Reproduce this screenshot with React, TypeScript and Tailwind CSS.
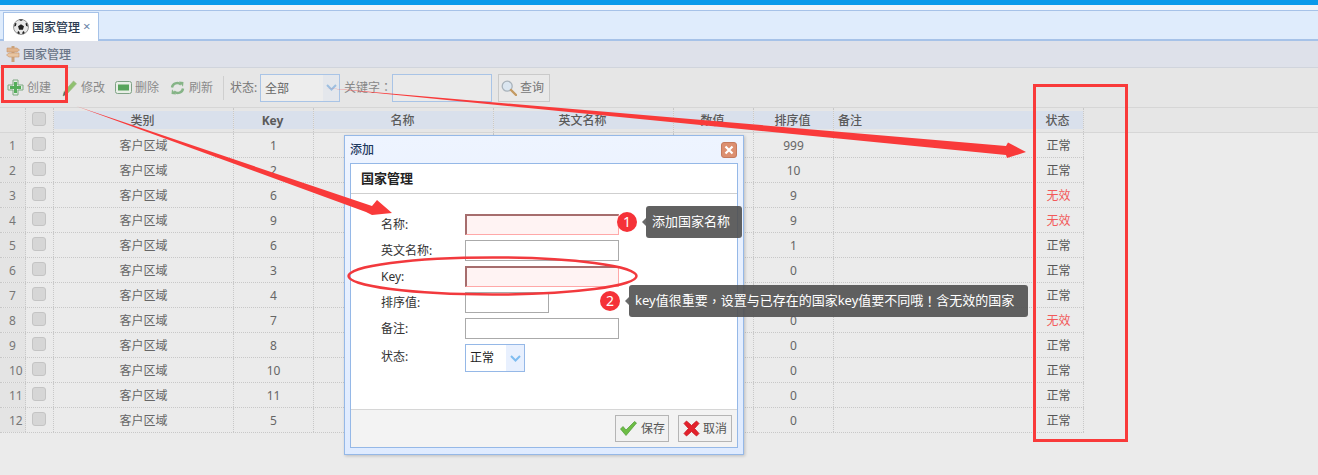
import React from "react";

const font = { fontFamily: '"Noto Sans","Noto Sans CJK SC",sans-serif' };
const tcFont = { fontFamily: '"Noto Sans CJK TC",sans-serif' };

const cols = [
  { t: "类别", w: "w-[180px]" },
  { t: "Key", w: "w-[80px]", bold: true },
  { t: "名称", w: "w-[180px]" },
  { t: "英文名称", w: "w-[180px]" },
  { t: "数值", w: "w-[80px]" },
  { t: "排序值", w: "w-[80px]" },
  { t: "备注", w: "w-[200px]", left: true },
  { t: "状态", w: "w-[50px]" },
];

const rows: [string, string, boolean][] = [
  ["1", "999", true],
  ["2", "10", true],
  ["6", "9", false],
  ["9", "9", false],
  ["6", "1", true],
  ["3", "0", true],
  ["4", "0", true],
  ["7", "0", false],
  ["8", "0", true],
  ["10", "0", true],
  ["11", "0", true],
  ["5", "0", true],
];

function Ball() {
  return (
    <svg width="16" height="16" viewBox="0 0 16 16">
      <circle cx="8" cy="8" r="7.5" fill="#e8e8e8" stroke="#555" strokeWidth="0.6" />
      <path d="M8 5.2 11 7.3 9.9 10.7H6.1L5 7.3Z" fill="#222" />
      <path d="M6 .8 8 2l2-1.2-.4-.3H6.4ZM14 4l.9 3.4-1.7-.5-.8-2.3ZM2 4l1.600.6-.8 2.300-1.700.5ZM4.200 13.200 5.800 12 7 14.500 5.500 15ZM11.800 13.200 10.200 12 9 14.500 10.500 15Z" fill="#222" />
    </svg>
  );
}

function Sign() {
  return (
    <svg width="16" height="18" viewBox="0 0 16 18">
      <rect x="6.500" y="1" width="3" height="16" fill="#c9a37b" />
      <path d="M2 3h10l2.500 2-2.500 2H2Z" fill="#e0b48c" stroke="#c8966b" strokeWidth=".6" />
      <path d="M14 8H4L1.500 10 4 12h10Z" fill="#e8c5a1" stroke="#c8966b" strokeWidth=".6" />
    </svg>
  );
}

function Plus() {
  return (
    <svg width="17" height="17" viewBox="0 0 17 17">
      <path d="M6 1h5v5h5v5h-5v5H6v-5H1V6h5Z" fill="#e4eee4" stroke="#7fa982" strokeWidth="1" strokeLinejoin="round" />
      <path d="M7 3h3v4h4v3h-4v4H7v-4H3V7h4Z" fill="#55ad5a" />
    </svg>
  );
}

function Pencil() {
  return (
    <svg width="15" height="18" viewBox="0 0 15 18">
      <path d="M1 17l1.200-4.500L11.500 2l3 2.700L5 15Z" fill="#8fc16f" stroke="#9cb78a" strokeWidth=".7" />
      <path d="M1 17l1.200-4.500L5 15Z" fill="#666" />
    </svg>
  );
}

function Minus() {
  return (
    <svg width="17" height="13" viewBox="0 0 17 13">
      <rect x=".5" y=".5" width="16" height="12" rx="2" fill="#e8eee6" stroke="#7fa285" />
      <rect x="3" y="3.500" width="11" height="6" fill="#58a45c" />
    </svg>
  );
}

function Refresh() {
  return (
    <svg width="15" height="16" viewBox="0 0 15 16" fill="none">
      <path d="M2 7.500C2.500 3.500 7.500 1.500 11 4.500" stroke="#86b487" strokeWidth="2.400" />
      <path d="M9 1.500l4.500.5-.5 4.800Z" fill="#86b487" />
      <path d="M13 8.500C12.500 12.500 7.500 14.500 4 11.500" stroke="#86b487" strokeWidth="2.400" />
      <path d="M6 14.500l-4.500-.5.500-4.800Z" fill="#86b487" />
    </svg>
  );
}

function Search() {
  return (
    <svg width="16" height="16" viewBox="0 0 16 16" fill="none">
      <circle cx="6.200" cy="6.200" r="5" fill="#dbe6f0" stroke="#a9b3bb" strokeWidth="1.300" />
      <path d="M10 10l5 5" stroke="#c49a62" strokeWidth="2.400" strokeLinecap="round" />
    </svg>
  );
}

function Chevron({ color }: { color: string }) {
  return (
    <svg width="11" height="7" viewBox="0 0 11 7" fill="none">
      <path d="M1 1l4.500 4.500L10 1" stroke={color} strokeWidth="2" />
    </svg>
  );
}

function Check() {
  return (
    <svg width="17" height="15" viewBox="0 0 17 15">
      <path d="M.5 8 3 5.500 6 9 14.500.5 16.500 2 6 14.500Z" fill="#6dbd45" stroke="#4e9a35" strokeWidth=".7" />
    </svg>
  );
}

function Cross({ size = 17 }: { size?: number }) {
  return (
    <svg width={size} height={size} viewBox="0 0 17 17">
      <path d="M3.500 1 8.500 5.500 13.500 1 16 3.500 11.500 8.500 16 13.500 13.500 16 8.500 11.500 3.500 16 1 13.500 5.500 8.500 1 3.500Z" fill="#e3222c" stroke="#c8141d" strokeWidth=".8" strokeLinejoin="round" />
    </svg>
  );
}

function ToolItem({ icon, label, cls }: { icon: React.ReactNode; label: string; cls: string }) {
  return (
    <div className={`flex items-center ${cls}`}>
      {icon}
      <span className="text-[12px] text-[#8a8a8a] leading-none">{label}</span>
    </div>
  );
}

function Field({ label, wide = true, invalid = false }: { label: string; wide?: boolean; invalid?: boolean }) {
  return (
    <div className="flex items-center h-[21px] mb-[5px]">
      <span className="w-[84px] text-[12px] text-[#333] pt-[1px]">{label}</span>
      <div
        className={`h-[21px] border ${wide ? "w-[154px]" : "w-[84px]"} ${
          invalid ? "bg-[#fff3f3] border-[#ffa8a8] border-l-[#a66d6d] border-t-[#a66d6d] border-t-2 border-l-2" : "bg-white border-[#aaaaaa]"
        }`}
      />
    </div>
  );
}

function Tip({ n, text, cls, w }: { n: string; text: React.ReactNode; cls: string; w: string }) {
  return (
    <div className={`absolute flex items-center ${cls}`}>
      <div className="w-[20px] h-[20px] rounded-full bg-[#f53238] text-white text-[14px] flex items-center justify-center leading-none">{n}</div>
      <div className="w-0 h-0 ml-[5px] border-y-[4px] border-y-transparent border-r-[4px] border-r-[#5a5a5a]/90" />
      <div className={`h-[32px] rounded-[3px] bg-[#505050]/90 text-white text-[13px] flex items-center pl-[6px] whitespace-nowrap ${w}`}>{text}</div>
    </div>
  );
}

export default function App() {
  return (
    <div className="relative w-[1318px] h-[475px] overflow-hidden bg-[#ebebeb]" style={font}>
      <div className="h-[5px] bg-[#0a9aea]" />
      <div className="h-[5px] bg-[#f0f4f9]" />
      <div className="h-[31px] bg-[#dfecfc] border-t border-b-2 border-[#a6c2e8] pl-[3px] flex items-end">
        <div className="w-[96px] h-[29px] -mb-[2px] bg-white border border-b-0 border-[#a6c2e8] flex items-center pl-[9px]">
          <Ball />
          <span className="ml-[3px] pt-[1px] text-[12px] font-medium text-[#2c3b50]">国家管理</span>
          <span className="ml-[3px] text-[13px] text-[#6a83a6]">×</span>
        </div>
      </div>
      <div className="h-[27px] bg-[#dee1ea] border-b border-[#d0d4dc] flex items-center pl-[5px] gap-[2px]">
        <Sign />
        <span className="pt-[1px] text-[12px] text-[#6b7687] font-medium">国家管理</span>
      </div>
      <div className="h-[39px] bg-[#e6e6e6] flex items-center">
        <ToolItem icon={<Plus />} label="创建" cls="ml-[7px] w-[55px] gap-[3px]" />
        <ToolItem icon={<Pencil />} label="修改" cls="w-[53px] gap-[4px]" />
        <ToolItem icon={<Minus />} label="删除" cls="w-[55px] gap-[3px]" />
        <ToolItem icon={<Refresh />} label="刷新" cls="w-[53px] gap-[4px]" />
        <div className="w-px h-[24px] bg-[#cfcfcf]" />
        <span className="ml-[6px] w-[30px] text-[12px] text-[#777]">状态:</span>
        <div className="w-[80px] h-[28px] border border-[#a9c4e6] flex bg-[#ededed]">
          <span className="w-[62px] pl-[4px] pt-[1px] text-[12px] text-[#666] leading-[26px]">全部</span>
          <div className="flex-1 bg-[#e4e7ec] flex items-center justify-center"><Chevron color="#9dbfe0" /></div>
        </div>
        <span className="ml-[4px] w-[48px] text-[12px] text-[#888] whitespace-nowrap">关键字<span style={tcFont}>：</span></span>
        <div className="w-[100px] h-[28px] border border-[#a9c4e6] bg-[#eaeaea]" />
        <div className="ml-[6px] w-[52px] h-[28px] border border-[#cacaca] bg-[#e9e9e9] flex items-center pl-[2px] gap-[3px]">
          <Search />
          <span className="text-[12px] text-[#777]">查询</span>
        </div>
      </div>
      <div className="h-[26px] bg-[#e6e6e6] border-y border-[#d6d6d6] flex w-full">
        <div className="w-[26px] border-r border-dotted border-[#c8c8c8]" />
        <div className="w-[28px] pr-[1px] pb-[2px] border-r border-dotted border-[#c8c8c8] flex items-center justify-center">
          <div className="w-[14px] h-[14px] rounded-[3px] bg-[#d6d6d6] border border-[#c4c4c4]" />
        </div>
        {cols.map((c) => (
          <div key={c.t} className={`${c.w} h-full border-r border-dotted border-[#c8c8c8] flex items-center`}>
            <div className={`w-full h-[18px] bg-[#d9e0ec] flex items-center pt-[1px] text-[12px] text-[#5a5a5a] ${c.bold ? "font-bold" : "font-medium"} ${c.left ? "justify-start pl-[4px]" : "justify-center pr-[2px]"}`}>
              {c.t}
            </div>
          </div>
        ))}
      </div>
      {rows.map((r, i) => (
        <div key={i} className="h-[25px] w-[1084px] flex border-b border-dotted border-[#c8c8c8] text-[12px] text-[#666]">
          <div className="w-[26px] pl-[9px] pt-[1px] bg-[#e4e4e4] border-r border-dotted border-[#c8c8c8] flex items-center text-[#777]">{i + 1}</div>
          <div className="w-[28px] pr-[1px] pb-[2px] border-r border-dotted border-[#c8c8c8] flex items-center justify-center">
            <div className="w-[14px] h-[14px] rounded-[3px] bg-[#d6d6d6] border border-[#c4c4c4]" />
          </div>
          <div className="w-[180px] pt-[1px] border-r border-dotted border-[#c8c8c8] flex items-center justify-center">客户区域</div>
          <div className="w-[80px] pt-[1px] border-r border-dotted border-[#c8c8c8] flex items-center justify-center">{r[0]}</div>
          <div className="w-[180px] border-r border-dotted border-[#c8c8c8]" />
          <div className="w-[180px] border-r border-dotted border-[#c8c8c8]" />
          <div className="w-[80px] border-r border-dotted border-[#c8c8c8]" />
          <div className="w-[80px] pt-[1px] border-r border-dotted border-[#c8c8c8] flex items-center justify-center">{r[1]}</div>
          <div className="w-[200px] border-r border-dotted border-[#c8c8c8]" />
          <div className={`w-[50px] pt-[1px] border-r border-dotted border-[#c8c8c8] flex items-center justify-center ${r[2] ? "text-[#555]" : "text-[#f25a5a]"}`}>
            {r[2] ? "正常" : "无效"}
          </div>
        </div>
      ))}

      {/* dialog */}
      <div className="absolute left-[344px] top-[135px] w-[400px] h-[320px] border border-[#95b8e7] bg-gradient-to-b from-[#eef4ff] to-[#dfebff] shadow-[1px_1px_3px_rgba(0,0,0,0.2)] flex flex-col">
        <div className="h-[27px] flex items-center justify-between pl-[5px] pr-[6px]">
          <span className="text-[12px] font-medium text-[#1f3a5f]">添加</span>
          <div className="w-[16px] h-[16px] rounded-[3px] bg-[#dc8f70] border border-[#c47a5e] flex items-center justify-center">
            <svg width="10" height="10" viewBox="0 0 10 10"><path d="M1.500 1.500l7 7M8.500 1.500l-7 7" stroke="#fff" strokeWidth="2.200" /></svg>
          </div>
        </div>
        <div className="mx-[5px] w-[388px] h-[285px] bg-white border border-[#95b8e7] flex flex-col">
          <div className="h-[30px] border-b border-[#cfcfcf] pl-[10px] flex items-center text-[13px] font-bold text-[#222]">国家管理</div>
          <div className="flex-1 pl-[30px] pt-[20px]">
            <Field label="名称:" invalid />
            <Field label="英文名称:" />
            <Field label="Key:" invalid />
            <Field label="排序值:" wide={false} />
            <Field label="备注:" />
            <div className="flex items-center">
              <span className="w-[84px] text-[12px] text-[#333] -mt-[2px]">状态:</span>
              <div className="w-[60px] h-[28px] border border-[#95b8e7] flex">
                <span className="w-[40px] pl-[4px] text-[12px] text-[#222] leading-[26px]">正常</span>
                <div className="flex-1 bg-[#e8f0fe] flex items-center justify-center"><Chevron color="#7fbdf0" /></div>
              </div>
            </div>
          </div>
          <div className="h-[38px] bg-[#f3f3f3] border-t border-[#d6d6d6] flex items-center justify-end gap-[9px] pr-[5px]">
            <div className="w-[54px] h-[27px] border border-[#b5b5b5] bg-[#f1f1f1] flex items-center pl-[4px] gap-[4px]">
              <Check />
              <span className="text-[12px] text-[#555]">保存</span>
            </div>
            <div className="w-[54px] h-[27px] border border-[#b5b5b5] bg-[#f1f1f1] flex items-center pl-[4px] gap-[3px]">
              <Cross />
              <span className="text-[12px] text-[#555]">取消</span>
            </div>
          </div>
        </div>
      </div>

      {/* annotations */}
      <svg className="absolute left-0 top-0 pointer-events-none" width="1318" height="475" viewBox="0 0 1318 475" fill="none">
        <rect x="2.500" y="66.500" width="64" height="35" stroke="#f93a3a" strokeWidth="3" />
        <rect x="1034.500" y="85.500" width="92" height="355" stroke="#f93a3a" strokeWidth="3" />
        <path d="M76 106 L372 206 L377 200 L392 213 L372 215 L366 212 Z" fill="#f93a3a" />
        <path d="M326 88 L1006 146 L1008 142.500 L1026 152 L1007 158 L1006 155 Z" fill="#f93a3a" />
        <ellipse cx="492.500" cy="276" rx="144" ry="18.500" stroke="#f2393d" strokeWidth="2.500" />
      </svg>
      <Tip n="1" text="添加国家名称" cls="left-[617px] top-[206px]" w="w-[96px]" />
      <Tip
        n="2"
        text={
          <>
            key值很重要<span style={tcFont}>，</span>设置与已存在的国家key值要不同哦<span style={tcFont}>！</span>含无效的国家
          </>
        }
        cls="left-[600px] top-[285px]"
        w="w-[399px]"
      />
    </div>
  );
}
